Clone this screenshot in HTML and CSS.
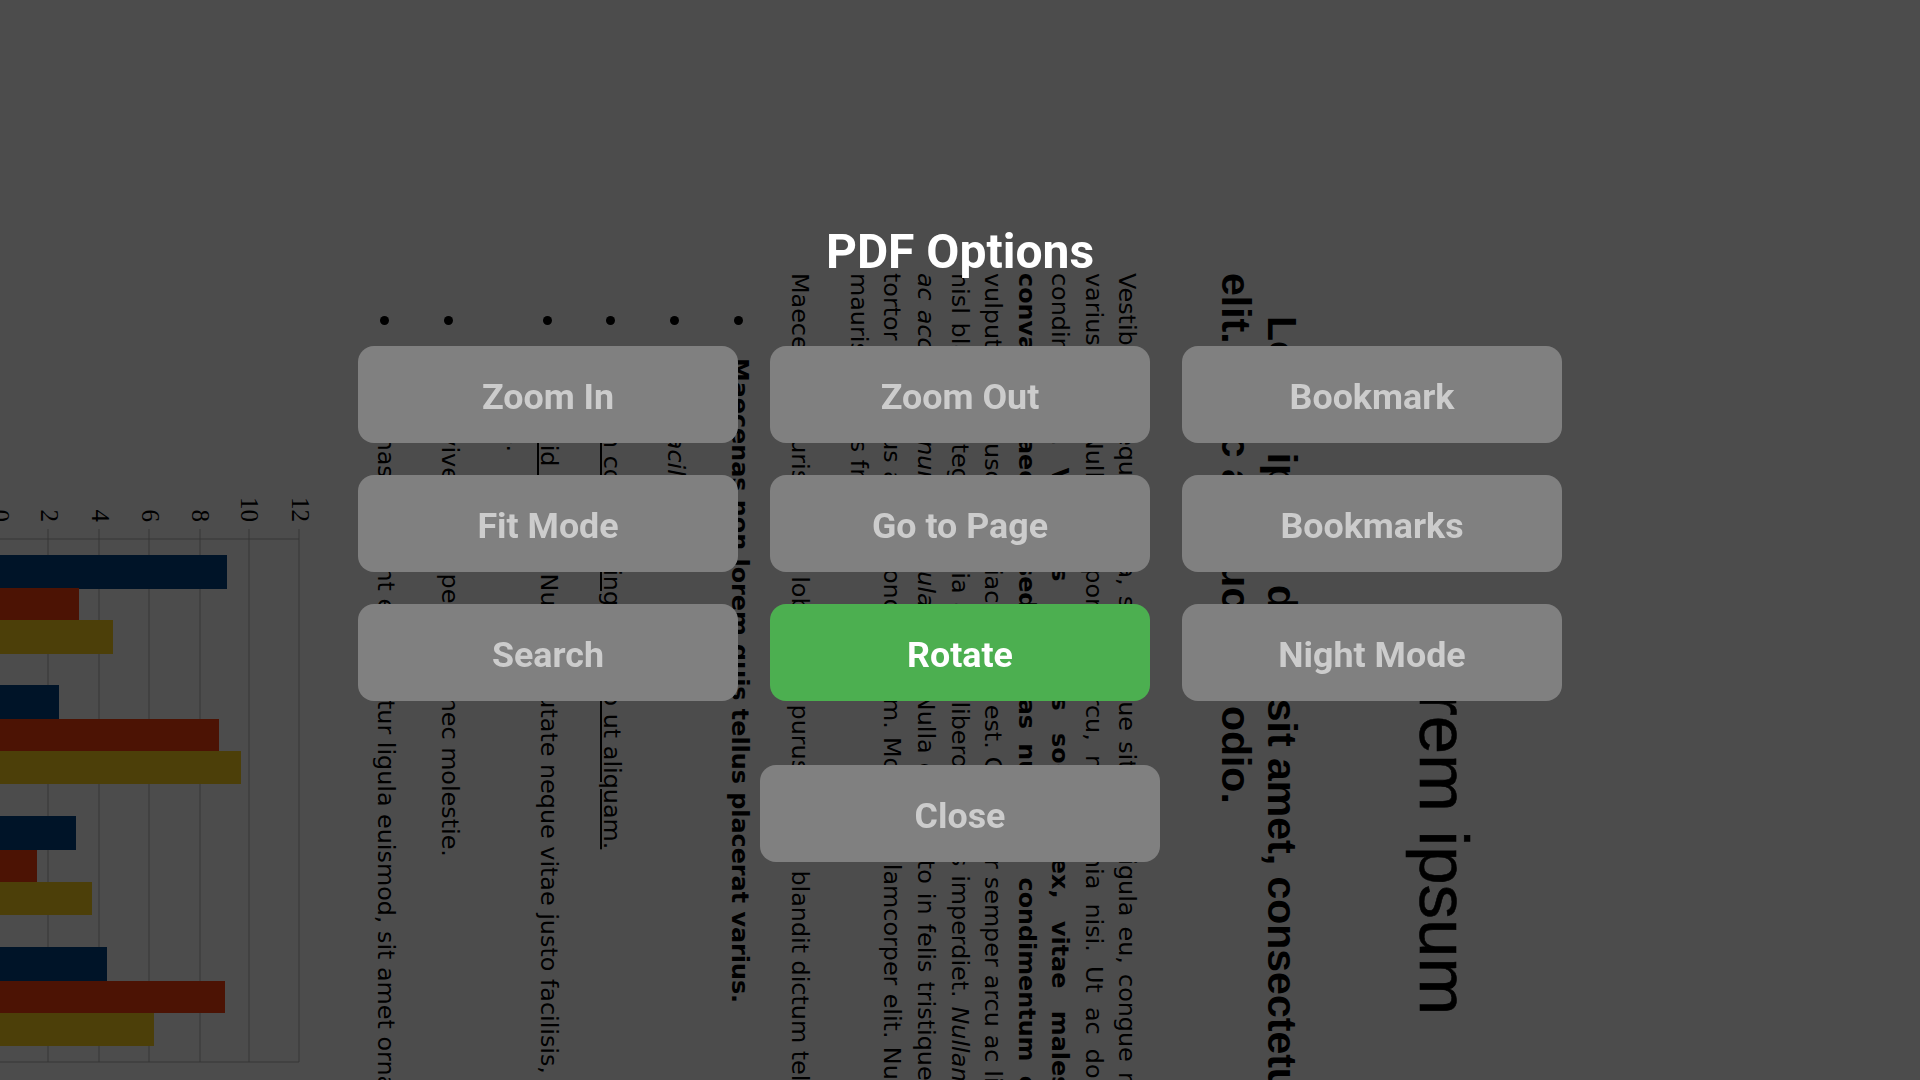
FILE: index.html
```html
<!DOCTYPE html>
<html lang="en">
<head>
    <meta charset="UTF-8">
    <meta name="viewport" content="width=device-width, initial-scale=1.0">
    <title>PDF Options</title>
    <link rel="stylesheet" href="styles.css">
</head>
<body>
    <div class="page">
        <h1 class="doc-title">Lorem ipsum</h1>
        <div class="doc-lead">
            <div class="lead-first">Lorem ipsum dolor sit amet, consectetur adipiscing</div>
            <div>elit. Nunc ac faucibus odio.</div>
        </div>
        <div class="doc-body">
            <div class="ln">Vestibulum neque massa, scelerisque sit amet ligula eu, congue molestie mi. Praesent ut</div>
            <div class="ln">varius sem. Nullam at porttitor arcu, nec lacinia nisi. Ut ac dolor vitae odio interdum</div>
            <div class="ln">condimentum. <b>Vivamus dapibus sodales ex, vitae malesuada ipsum cursus</b></div>
            <div class="ln"><b>convallis. Maecenas sed egestas nulla, ac condimentum orci.</b> Mauris diam felis,</div>
            <div class="ln">vulputate ac suscipit et, iaculis non est. Curabitur semper arcu ac ligula semper, nec luctus</div>
            <div class="ln">nisl blandit. Integer lacinia ante ac libero lobortis imperdiet. <i>Nullam mollis convallis ipsum,</i></div>
            <div class="ln"><i>ac accumsan nunc vehicula vitae.</i> Nulla eget justo in felis tristique fringilla. Morbi sit amet</div>
            <div class="ln">tortor quis risus auctor condimentum. Morbi in ullamcorper elit. Nulla iaculis tellus sit amet</div>
            <div>mauris tempus fringilla.</div>
        </div>
        <p class="doc-para">Maecenas mauris lectus, lobortis et purus mattis, blandit dictum tellus.</p>
        <ul class="doc-list">
            <li><b>Maecenas non lorem quis tellus placerat varius.</b></li>
            <li><i>Nulla facilisi.</i></li>
            <li><u>Aenean congue fringilla justo ut aliquam.</u></li>
            <li class="two-line"><u>Mauris id ex erat.</u> Nunc vulputate neque vitae justo facilisis, non condimentum ante<br>sagittis.</li>
            <li>Morbi viverra semper lorem nec molestie.</li>
            <li>Maecenas tincidunt est efficitur ligula euismod, sit amet ornare est vulputate.</li>
        </ul>
        <svg class="chart" width="1098" height="320" viewBox="0 0 1098 320">
            <g class="grid">
                <path d="M256 262H789M256 211H789M256 161H789M256 110H789M256 61H789M256 11H789"/>
                <path d="M266 11V320M789 11V320"/>
            </g>
            <g class="bars-a">
                <rect x="282" y="83" width="34" height="237"/>
                <rect x="412" y="251" width="34" height="69"/>
                <rect x="543" y="234" width="34" height="86"/>
                <rect x="674" y="203" width="34" height="117"/>
            </g>
            <g class="bars-b">
                <rect x="315" y="231" width="32" height="89"/>
                <rect x="446" y="91" width="32" height="229"/>
                <rect x="577" y="273" width="32" height="47"/>
                <rect x="708" y="85" width="32" height="235"/>
            </g>
            <g class="bars-c">
                <rect x="347" y="197" width="34" height="123"/>
                <rect x="478" y="69" width="33" height="251"/>
                <rect x="609" y="218" width="33" height="102"/>
                <rect x="740" y="156" width="33" height="164"/>
            </g>
            <g class="ticks">
                <text x="249" y="318">0</text>
                <text x="249" y="269">2</text>
                <text x="249" y="218">4</text>
                <text x="249" y="168">6</text>
                <text x="249" y="118">8</text>
                <text x="249" y="69">10</text>
                <text x="249" y="18">12</text>
            </g>
        </svg>
    </div>

    <div class="overlay">
        <h2 class="overlay-title">PDF Options</h2>
        <div class="option-grid">
            <button class="option">Zoom In</button>
            <button class="option">Zoom Out</button>
            <button class="option">Bookmark</button>
            <button class="option">Fit Mode</button>
            <button class="option">Go to Page</button>
            <button class="option">Bookmarks</button>
            <button class="option">Search</button>
            <button class="option active">Rotate</button>
            <button class="option">Night Mode</button>
        </div>
        <button class="option close">Close</button>
    </div>
</body>
</html>
```

FILE: styles.css
```css
html, body {
    height: 100%;
}

body {
    margin: 0;
    overflow: hidden;
    background-color: #fff;
    color: #000;
    font-family: 'Liberation Sans', sans-serif;
}

/* the document, turned a quarter clockwise */
.page {
    position: absolute;
    left: 1500px;
    top: 273px;
    width: 1098px;
    transform: rotate(90deg);
    transform-origin: top left;
}

.doc-title {
    margin: 0;
    padding: 19px 13px 0 0;
    font-size: 69px;
    font-weight: normal;
    line-height: 76px;
    text-align: center;
    white-space: nowrap;
    -webkit-text-stroke: 0.6px #000;
}

.doc-lead {
    margin-top: 100px;
    font-size: 41px;
    font-weight: bold;
    line-height: 46px;
    white-space: nowrap;
}

.lead-first {
    padding-left: 43px;
}

.doc-body,
.doc-para,
.doc-list {
    font-family: 'DejaVu Sans', sans-serif;
    font-size: 23.85px;
    line-height: 33.6px;
}

.doc-body {
    margin-top: 69.5px;
}

.ln {
    text-align: justify;
    text-align-last: justify;
}

.doc-para {
    margin: 25.6px 0 0;
}

.doc-list {
    margin: 26.4px 0 0;
    padding: 0 0 0 85px;
    list-style: none;
}

.doc-list li {
    position: relative;
    margin-bottom: 30px;
}

.doc-list li.two-line {
    margin-bottom: 32px;
}

.doc-list li:last-child {
    margin-bottom: 0;
}

.doc-list li::before {
    content: '';
    position: absolute;
    left: -42px;
    top: 13px;
    width: 9px;
    height: 9px;
    border-radius: 50%;
    background: #000;
}

.chart {
    display: block;
    margin-top: 58px;
    overflow: visible;
}

.grid path {
    fill: none;
    stroke: #b3b3b3;
    stroke-width: 1;
}

.bars-a { fill: #004586; }
.bars-b { fill: #ff420e; }
.bars-c { fill: #ffd320; }

.ticks text {
    font-family: 'Liberation Serif', serif;
    font-size: 25px;
    text-anchor: end;
}

/* dialog */
.overlay {
    position: fixed;
    inset: 0;
    display: flex;
    flex-direction: column;
    align-items: center;
    padding-top: 224px;
    box-sizing: border-box;
    background: rgba(0, 0, 0, 0.7);
    font-family: Roboto, sans-serif;
}

.overlay-title {
    margin: 0 0 66px;
    color: #fff;
    font-size: 48px;
    font-weight: bold;
    line-height: 56px;
}

.option-grid {
    display: grid;
    grid-template-columns: repeat(3, 380px);
    gap: 32px;
}

.option {
    height: 97px;
    padding: 4px 0 0;
    border: 0;
    border-radius: 16px;
    background: #808080;
    color: #ccc;
    font-family: inherit;
    font-size: 35.8px;
    font-weight: bold;
}

.option.active {
    background: #4caf50;
    color: #fff;
}

.close {
    width: 400px;
    margin-top: 64px;
}
```
